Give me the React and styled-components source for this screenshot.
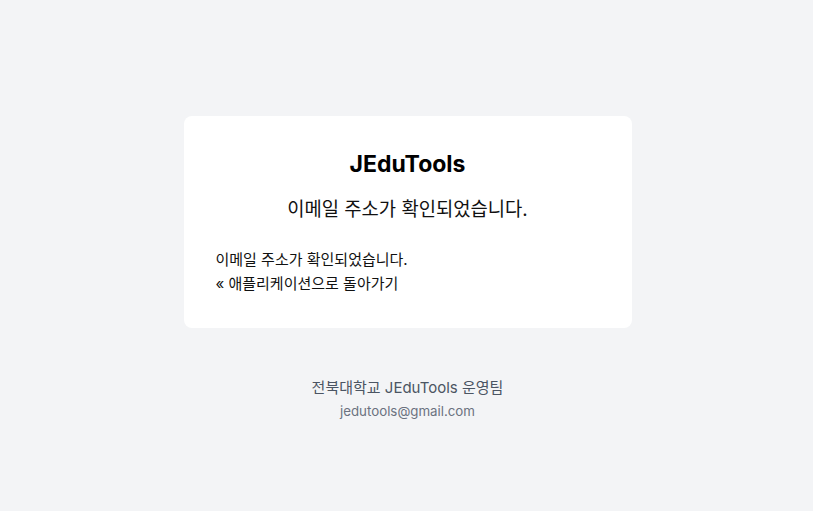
import React from 'react';
import styled, { createGlobalStyle } from 'styled-components';

const GlobalStyle = createGlobalStyle`
  * { box-sizing: border-box; }
  body {
    margin: 0;
    background: #f3f4f6;
    font-family: Inter, "Noto Sans CJK KR", "Noto Sans", sans-serif;
    color: #111827;
  }
`;

const Page = styled.div`
  min-height: 100vh;
  display: flex;
  flex-direction: column;
  align-items: center;
  padding: 116px 0 0 2px;
`;

const Card = styled.div`
  width: 448px;
  background: #ffffff;
  border-radius: 8px;
  padding: 32px;
`;

const Title = styled.h1`
  margin: 0;
  font-size: 23px;
  line-height: 32px;
  font-weight: 700;
  text-align: center;
  color: #000;
`;

const Subtitle = styled.h2`
  margin: 16px 0 0;
  font-size: 18.8px;
  line-height: 28px;
  font-weight: 400;
  text-align: center;
  color: #111;
`;

const Body = styled.div`
  margin-top: 24px;
  font-size: 15px;
  line-height: 24px;
  color: #111;
`;

const BackLink = styled.a`
  color: #111;
  text-decoration: none;
`;

const Footer = styled.footer`
  margin-top: 50px;
  text-align: center;
`;

const Team = styled.div`
  font-size: 15px;
  line-height: 20px;
  color: #4b5563;
`;

const Email = styled.div`
  margin-top: 3px;
  font-size: 13.3px;
  line-height: 20px;
  color: #6b7280;
`;

export default function App() {
  return (
    <>
      <GlobalStyle />
      <Page>
        <Card>
          <Title>JEduTools</Title>
          <Subtitle>이메일 주소가 확인되었습니다.</Subtitle>
          <Body>
            <div>이메일 주소가 확인되었습니다.</div>
            <BackLink href="#">« 애플리케이션으로 돌아가기</BackLink>
          </Body>
        </Card>
        <Footer>
          <Team>전북대학교 JEduTools 운영팀</Team>
          <Email>jedutools@gmail.com</Email>
        </Footer>
      </Page>
    </>
  );
}
